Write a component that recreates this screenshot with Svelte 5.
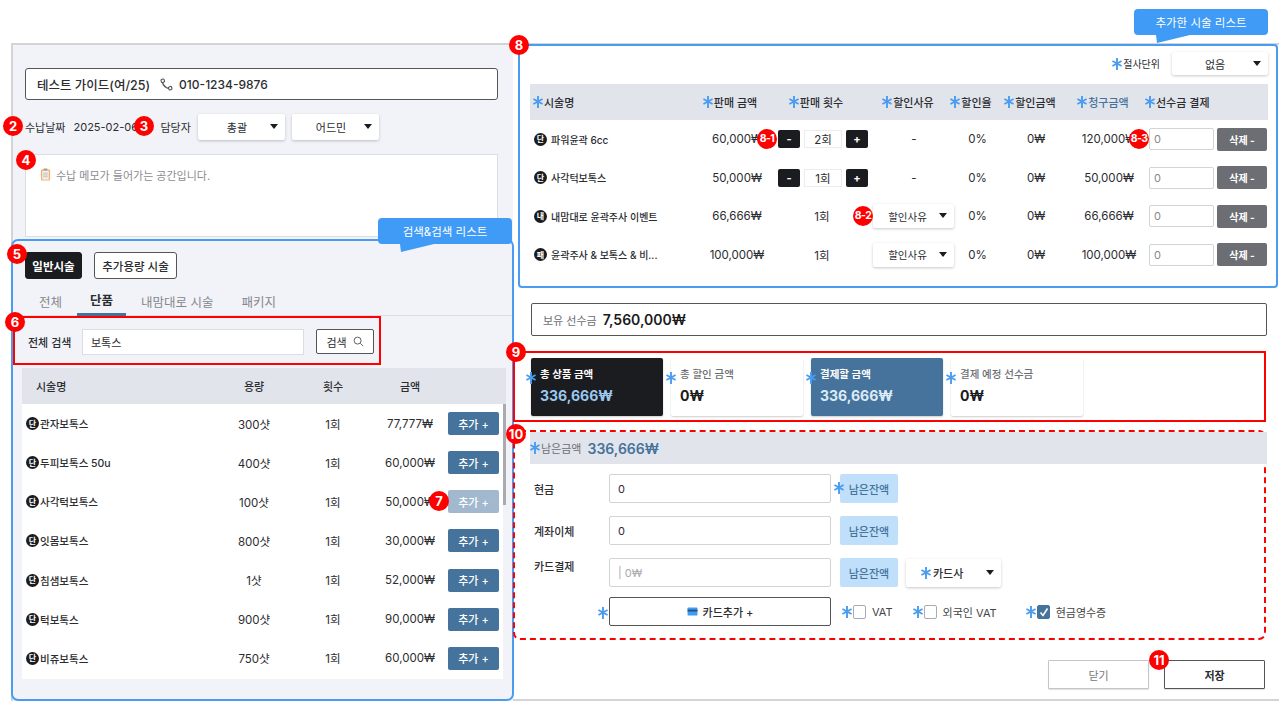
<script>
	const procedures = [
		{ name: '관자보톡스', volume: '300샷', price: '77,777₩' },
		{ name: '두피보톡스 50u', volume: '400샷', price: '60,000₩' },
		{ name: '사각턱보톡스', volume: '100샷', price: '50,000₩', off: true },
		{ name: '잇몸보톡스', volume: '800샷', price: '30,000₩' },
		{ name: '침샘보톡스', volume: '1샷', price: '52,000₩' },
		{ name: '턱보톡스', volume: '900샷', price: '90,000₩' },
		{ name: '비쥬보톡스', volume: '750샷', price: '60,000₩' }
	];

	const added = [
		{ kind: '단', name: '파워윤곽 6cc', price: '60,000₩', count: '2회', stepper: true, total: '120,000₩' },
		{ kind: '단', name: '사각턱보톡스', price: '50,000₩', count: '1회', stepper: true, total: '50,000₩' },
		{ kind: '내', name: '내맘대로 윤곽주사 이벤트', price: '66,666₩', count: '1회', total: '66,666₩' },
		{ kind: '패', name: '윤곽주사 & 보톡스 & 비...', price: '100,000₩', count: '1회', total: '100,000₩' }
	];

	const heads = [
		{ label: '시술명', cls: 'name-head' },
		{ label: '판매 금액' },
		{ label: '판매 횟수' },
		{ label: '할인사유' },
		{ label: '할인율' },
		{ label: '할인금액' },
		{ label: '청구금액', cls: 'accent' },
		{ label: '선수금 결제', cls: 'prepay-head' }
	];

	const totals = [
		{ label: '총 상품 금액', value: '336,666₩', tone: 'dark' },
		{ label: '총 할인 금액', value: '0₩', tone: '' },
		{ label: '결제할 금액', value: '336,666₩', tone: 'blue' },
		{ label: '결제 예정 선수금', value: '0₩', tone: '' }
	];

	const markers = [
		{ t: '2', x: 13, y: 126 },
		{ t: '3', x: 144, y: 126 },
		{ t: '4', x: 26, y: 160 },
		{ t: '5', x: 17, y: 254 },
		{ t: '6', x: 15, y: 322 },
		{ t: '7', x: 439, y: 501 },
		{ t: '8', x: 519, y: 45 },
		{ t: '9', x: 516, y: 352 },
		{ t: '10', x: 516, y: 434 },
		{ t: '11', x: 1159, y: 660 },
		{ t: '8-1', x: 767, y: 139, small: true },
		{ t: '8-3', x: 1139, y: 139, small: true },
		{ t: '8-2', x: 863, y: 216, small: true }
	];
</script>

{#snippet star()}
	<svg class="star" viewBox="0 0 10 12" width="10" height="12" aria-hidden="true">
		<path d="M5 0v12M.4 3l9.200 5M9.600 3L.4 8" fill="none" stroke="#4a9cf0" stroke-width="1.900" />
	</svg>
{/snippet}

{#snippet badge(kind)}
	<span class="badge">{kind}</span>
{/snippet}

<div class="page">
	<div class="modal">
		<div class="side">
			<div class="top">
				<div class="guest">
					<span class="guest-name">테스트 가이드(여/25)</span>
					<svg class="phone" viewBox="0 0 14 14" width="13" height="13" aria-hidden="true">
						<path d="M2.500 4.200C3.400 8 6 10.600 9.800 11.500" fill="none" stroke="#555" stroke-width="1.500" />
						<rect x="1.300" y="1.300" width="3.400" height="3.400" rx="1" fill="#fff" stroke="#555" stroke-width="1.200" transform="rotate(-20 3 3)" />
						<rect x="9.300" y="9.300" width="3.400" height="3.400" rx="1" fill="#fff" stroke="#555" stroke-width="1.200" transform="rotate(-20 11 11)" />
					</svg>
					<span>010-1234-9876</span>
				</div>
				<div class="meta">
					<span class="meta-label">수납날짜</span>
					<span class="meta-date">2025-02-06</span>
					<span class="meta-owner">담당자</span>
					<div class="select owner">총괄<i class="caret"></i></div>
					<div class="select owner">어드민<i class="caret"></i></div>
				</div>
				<div class="memo">
					<svg viewBox="0 0 12 14" width="11" height="13" aria-hidden="true">
						<rect x="1" y="1.500" width="10" height="12" rx="1" fill="#f0b27a" />
						<rect x="2.500" y="3" width="7" height="9.500" fill="#f7f3ec" />
						<path d="M3.500 5.500h5M3.500 7.500h5M3.500 9.500h5" stroke="#a9a9a9" stroke-width=".8" />
						<rect x="4" y=".5" width="4" height="2" fill="#9a9a9a" />
					</svg>
					<span>수납 메모가 들어가는 공간입니다.</span>
				</div>
			</div>

			<section class="search-panel">
				<div class="types">
					<button class="type on">일반시술</button>
					<button class="type extra">추가용량 시술</button>
				</div>
				<div class="tabs">
					<span class="tab">전체</span>
					<span class="tab active">단품</span>
					<span class="tab">내맘대로 시술</span>
					<span class="tab">패키지</span>
				</div>
				<div class="search">
					<span class="search-label">전체 검색</span>
					<div class="search-input">보톡스</div>
					<button class="search-btn">
						검색
						<svg viewBox="0 0 12 12" width="11" height="11" aria-hidden="true">
							<circle cx="5" cy="5" r="3.800" fill="none" stroke="#555" stroke-width="1" />
							<path d="M8 8l3 3" stroke="#555" stroke-width="1" />
						</svg>
					</button>
				</div>
				<div class="table">
					<div class="thead proc-grid">
						<span class="th-name">시술명</span>
						<span>용량</span>
						<span>횟수</span>
						<span>금액</span>
					</div>
					<div class="tbody">
						{#each procedures as p}
							<div class="proc-grid proc-row">
								<span class="proc-name">{@render badge('단')}{p.name}</span>
								<span>{p.volume}</span>
								<span>1회</span>
								<span>{p.price}</span>
								<button class="add" class:off={p.off}>추가 +</button>
							</div>
						{/each}
						<div class="scroll"></div>
					</div>
				</div>
			</section>
		</div>

		<div class="right">
			<section class="added">
				<div class="cut">
					{@render star()}
					<span>절사단위</span>
					<div class="select cut-select">없음<i class="caret"></i></div>
				</div>
				<div class="added-head">
					{#each heads as h}
						<span class={h.cls}>{@render star()}{h.label}</span>
					{/each}
				</div>
				{#each added as row}
					<div class="added-row">
						<span class="added-name">{@render badge(row.kind)}{row.name}</span>
						<span class="added-price">{row.price}</span>
						{#if row.stepper}
							<span class="stepper">
								<b class="step">-</b>
								<span class="count">{row.count}</span>
								<b class="step">+</b>
							</span>
						{:else}
							<span class="count-text">{row.count}</span>
						{/if}
						{#if row.stepper}
							<span>-</span>
						{:else}
							<div class="select reason">할인사유<i class="caret"></i></div>
						{/if}
						<span class="rate">0%</span>
						<span>0₩</span>
						<span>{row.total}</span>
						<div class="prepay">0</div>
						<button class="del">삭제 -</button>
					</div>
				{/each}
			</section>

			<div class="held">
				<span class="held-label">보유 선수금</span>
				<span class="held-value">7,560,000₩</span>
			</div>

			<div class="totals">
				{#each totals as c}
					<div class="total-card {c.tone}">
						<span class="card-star">{@render star()}</span>
						<div class="total-label">{c.label}</div>
						<div class="total-value">{c.value}</div>
					</div>
				{/each}
			</div>

			<div class="pay">
				<div class="pay-head">
					{@render star()}
					<span class="pay-label">남은금액</span>
					<span class="pay-value">336,666₩</span>
				</div>
				<div class="pay-row first">
					<span class="pay-name">현금</span>
					<div class="pay-input">0</div>
					<div class="rest">
						<span class="rest-star">{@render star()}</span>
						남은잔액
					</div>
				</div>
				<div class="pay-row">
					<span class="pay-name">계좌이체</span>
					<div class="pay-input">0</div>
					<div class="rest">남은잔액</div>
				</div>
				<div class="pay-row">
					<span class="pay-name raised">카드결제</span>
					<div class="pay-input hint">| 0₩</div>
					<div class="rest">남은잔액</div>
					<div class="select card-co">{@render star()}<span>카드사</span><i class="caret"></i></div>
				</div>
				<div class="pay-row last">
					<span class="pay-name"></span>
					<button class="card-add">
						<span class="card-add-star">{@render star()}</span>
						<svg viewBox="0 0 12 10" width="11" height="9" aria-hidden="true">
							<rect x=".5" y=".5" width="11" height="9" rx="1" fill="#3f9bf5" />
							<rect x=".5" y="3" width="11" height="2" fill="#24527c" />
						</svg>
						카드추가 +
					</button>
					<label class="check vat">{@render star()}<i class="box"></i>VAT</label>
					<label class="check foreign">{@render star()}<i class="box"></i>외국인 VAT</label>
					<label class="check cash">
						{@render star()}
						<i class="box on">
							<svg viewBox="0 0 12 12" width="12" height="12" aria-hidden="true">
								<path d="M2.500 6.500l2.500 3 4.500-7" fill="none" stroke="#fff" stroke-width="1.600" />
							</svg>
						</i>
						현금영수증
					</label>
				</div>
			</div>

			<div class="actions">
				<button class="act">닫기</button>
				<button class="act save">저장</button>
			</div>
		</div>
	</div>

	<div class="tip tip-search">검색&amp;검색 리스트</div>
	<div class="tip tip-added">추가한 시술 리스트</div>

	{#each markers as m}
		<span class="marker" class:small={m.small} style="left:{m.x - 10}px;top:{m.y - 10}px">{m.t}</span>
	{/each}
</div>

<style>
	:global(body) {
		font-family: Inter, 'Noto Sans CJK KR', sans-serif;
		color: #2b2d31;
		background: #fff;
		overflow: hidden;
	}

	* {
		box-sizing: border-box;
	}

	button {
		font-family: inherit;
		cursor: pointer;
	}

	.page {
		position: relative;
		width: 1279px;
		height: 702px;
		padding: 43px 0 0 11px;
		overflow: hidden;
	}

	.modal {
		display: grid;
		grid-template-columns: 500px 1fr;
		height: 658px;
		border: 2px solid #d3d4d6;
		border-right: none;
	}

	.side {
		background: #f1f3f8;
		min-width: 0;
	}

	.top {
		padding: 23px 0 0 12px;
	}

	.guest {
		display: flex;
		align-items: center;
		width: 473px;
		height: 32px;
		padding-left: 11px;
		background: #fff;
		border: 1px solid #555;
		border-radius: 3px;
		font-size: 12px;
		font-weight: 500;
	}

	.guest-name {
		font-size: 12.500px;
	}

	.phone {
		margin: 0 6px 0 10px;
	}

	.meta {
		display: flex;
		align-items: center;
		height: 27px;
		margin-top: 13px;
		font-size: 11px;
	}

	.meta-date {
		margin-left: 8px;
		width: 87px;
	}

	.meta-owner {
		width: 38px;
	}

	.select {
		position: relative;
		display: flex;
		align-items: center;
		justify-content: center;
		background: #fff;
		border-radius: 2px;
		box-shadow: 0 1px 3px rgba(0, 0, 0, 0.22);
		font-size: 11px;
	}

	.caret {
		position: absolute;
		right: 7px;
		top: 50%;
		margin-top: -3px;
		border-left: 4px solid transparent;
		border-right: 4px solid transparent;
		border-top: 5px solid #1a1c20;
	}

	.owner {
		width: 87px;
		height: 26px;
		margin-right: 7px;
		padding-right: 10px;
	}

	.memo {
		display: flex;
		align-items: center;
		gap: 5px;
		width: 473px;
		height: 83px;
		margin-top: 14px;
		padding: 0 0 42px 14px;
		background: #fff;
		border: 1px solid #dcdde0;
		font-size: 11px;
		color: #8b8d91;
	}

	.search-panel {
		width: 503px;
		height: 462px;
		margin: 2px 0 0 -2px;
		border: 2px solid #4a9cf0;
		border-radius: 7px;
	}

	.types {
		display: flex;
		gap: 12px;
		padding: 11px 0 0 12px;
	}

	.type {
		width: 57px;
		height: 27px;
		padding: 0;
		background: #fff;
		border: 1px solid #555;
		border-radius: 3px;
		font-size: 11.500px;
		font-weight: 500;
		color: #2b2d31;
	}

	.type.extra {
		width: 83px;
	}

	.type.on {
		background: #1a1c20;
		border-color: #1a1c20;
		color: #fff;
		font-weight: 700;
	}

	.tabs {
		display: flex;
		gap: 2px;
		height: 30px;
		margin-top: 7px;
		padding-left: 13px;
		border-bottom: 1px solid #dcdde0;
	}

	.tab {
		padding: 6px 13px 0;
		font-size: 12.500px;
		color: #85878c;
		margin-bottom: -1px;
	}

	.tab.active {
		border-bottom: 3px solid #45739b;
		color: #2b2d31;
		font-weight: 700;
		padding-top: 4px;
	}

	.search {
		display: flex;
		align-items: center;
		width: 368px;
		height: 49px;
		padding: 2px 0 0 13px;
		border: 2px solid #f00;
		font-size: 11px;
	}

	.search-label {
		width: 54px;
		font-weight: 500;
	}

	.search-input {
		display: flex;
		align-items: center;
		width: 222px;
		height: 26px;
		padding-left: 8px;
		background: #fff;
		border: 1px solid #dcdde0;
	}

	.search-btn {
		display: flex;
		align-items: center;
		justify-content: center;
		gap: 6px;
		width: 58px;
		height: 25px;
		margin-left: 12px;
		background: #fff;
		border: 1px solid #555;
		border-radius: 2px;
		font-size: 11px;
		color: #2b2d31;
	}

	.table {
		margin: 3px 0 0 9px;
		font-size: 11px;
	}

	.thead {
		width: 484px;
		height: 36px;
		background: #e1e4eb;
		font-weight: 500;
	}

	.proc-grid {
		display: grid;
		grid-template-columns: 194px 76px 82px 72px 1fr;
		align-items: center;
		text-align: center;
	}

	.th-name {
		padding-left: 14px;
		text-align: left;
	}

	.tbody {
		position: relative;
		width: 481px;
		height: 275px;
		background: #fff;
	}

	.proc-row {
		height: 39.150px;
		padding-right: 4px;
		font-size: 11.500px;
	}

	.proc-name {
		display: flex;
		align-items: center;
		gap: 1px;
		padding-left: 4px;
		font-size: 10.500px;
		font-weight: 500;
	}

	.badge {
		display: inline-flex;
		align-items: center;
		justify-content: center;
		flex: none;
		width: 13px;
		height: 13px;
		border-radius: 50%;
		background: #1a1c20;
		color: #fff;
		font-size: 8px;
		font-weight: 700;
		line-height: 1;
	}

	.add {
		justify-self: end;
		width: 51px;
		height: 23px;
		padding: 0;
		background: #45739b;
		border: none;
		border-radius: 2px;
		color: #fff;
		font-size: 11px;
		font-weight: 500;
	}

	.add.off {
		background: #a1b8cf;
	}

	.scroll {
		position: absolute;
		left: 481px;
		top: 0;
		width: 3px;
		height: 101px;
		background: #a9abb0;
	}

	.right {
		min-width: 0;
	}

	.added {
		width: 760px;
		height: 244px;
		margin: -1px 0 0 5px;
		padding: 6px 8px 0 10px;
		background: #fff;
		border: 2px solid #4a9cf0;
		border-radius: 4px;
		font-size: 11px;
	}

	.cut {
		display: flex;
		align-items: center;
		justify-content: flex-end;
		gap: 1px;
		height: 23px;
		font-size: 10px;
	}

	.cut-select {
		width: 96px;
		height: 23px;
		margin-left: 11px;
		padding-right: 10px;
	}

	.added-head,
	.added-row {
		display: grid;
		align-items: center;
		text-align: center;
	}

	.added-head {
		grid-template-columns: 164px 72px 100px 84px 42px 76px 70px 130px;
		height: 36px;
		margin-top: 9px;
		background: #e1e4eb;
		font-size: 11px;
		font-weight: 500;
	}

	.added-head span {
		display: flex;
		align-items: center;
		justify-content: center;
		gap: 1px;
		white-space: nowrap;
	}

	.added-head .name-head {
		justify-content: flex-start;
		padding-left: 3px;
	}

	.added-head .prepay-head {
		justify-content: flex-start;
		padding-left: 7px;
	}

	.added-head .accent {
		color: #45739b;
	}

	.added-row {
		grid-template-columns: 164px 74px 105px 82px 48px 66px 80px 68px 51px;
		height: 38.500px;
		font-size: 11.500px;
	}

	.added-name {
		display: flex;
		align-items: center;
		gap: 4px;
		padding-left: 4px;
		font-size: 10px;
		font-weight: 500;
		white-space: nowrap;
	}

	.added-price {
		padding-left: 8px;
		margin-right: -4px;
	}

	.rate {
		padding-right: 3px;
	}

	.stepper {
		display: flex;
		align-items: center;
		gap: 4px;
		padding-left: 10px;
	}

	.step {
		display: flex;
		align-items: center;
		justify-content: center;
		width: 22px;
		height: 18px;
		background: #1a1c20;
		border-radius: 2px;
		color: #fff;
		font-size: 11px;
	}

	.count {
		display: flex;
		align-items: center;
		justify-content: center;
		width: 38px;
		height: 18px;
		background: #fff;
		border: 1px solid #ececee;
	}

	.count-text {
		padding-left: 3px;
	}

	.reason {
		width: 81px;
		height: 24px;
		font-size: 10.500px;
		padding-right: 12px;
	}

	.prepay {
		display: flex;
		align-items: center;
		width: 65px;
		height: 22px;
		padding-left: 4px;
		border: 1px solid #d3d4d6;
		border-radius: 2px;
		color: #888;
		font-size: 11px;
	}

	.del {
		justify-self: start;
		width: 50px;
		height: 23px;
		padding: 0;
		background: #6c6e73;
		border: none;
		border-radius: 2px;
		color: #fff;
		font-size: 10px;
		font-weight: 700;
	}

	.held {
		display: flex;
		align-items: center;
		gap: 6px;
		width: 736px;
		height: 33px;
		margin: 15px 0 0 18px;
		padding-left: 11px;
		border: 1px solid #555;
		border-radius: 2px;
	}

	.held-label {
		font-size: 11px;
		color: #6c6e73;
	}

	.held-value {
		font-size: 14px;
		font-weight: 600;
		color: #1a1c20;
	}

	.totals {
		display: flex;
		gap: 8px;
		width: 753px;
		height: 71px;
		margin-top: 15px;
		padding: 5px 0 0 16px;
		border: 2px solid #f00;
	}

	.total-card {
		position: relative;
		width: 132px;
		height: 58px;
		padding: 9px 0 0 9px;
		background: #fff;
		box-shadow: 0 1px 2px rgba(0, 0, 0, 0.2);
		border-radius: 2px;
	}

	.total-card.dark {
		background: #1a1c20;
	}

	.total-card.blue {
		background: #45739b;
	}

	.card-star {
		position: absolute;
		left: -5px;
		top: 10px;
	}

	.total-label {
		font-size: 10.500px;
		font-weight: 500;
		color: #6c6e73;
		line-height: 15px;
	}

	.dark .total-label,
	.blue .total-label {
		color: #fff;
		font-weight: 700;
	}

	.total-value {
		margin-top: 5px;
		font-size: 14px;
		font-weight: 700;
		color: #1a1c20;
		line-height: 18px;
	}

	.dark .total-value {
		color: #9cc8ee;
	}

	.blue .total-value {
		color: #dcebf8;
	}

	.pay {
		position: relative;
		width: 753px;
		height: 210px;
		margin-top: 8px;
		border: 2px dashed #f00;
		border-radius: 7px;
		font-size: 11px;
	}

	.pay-head {
		display: flex;
		align-items: center;
		gap: 1px;
		width: 737px;
		height: 32px;
		margin-left: 15px;
		background: #e1e4eb;
	}

	.pay-label {
		color: #6c6e73;
		font-size: 11px;
	}

	.pay-value {
		margin-left: 5px;
		color: #45739b;
		font-size: 14px;
		font-weight: 600;
	}

	.pay-row {
		display: flex;
		align-items: center;
		height: 29px;
		margin-top: 13px;
	}

	.pay-row.first {
		margin-top: 10px;
	}

	.pay-row.last {
		margin-top: 10px;
	}

	.pay-name {
		flex: none;
		width: 94px;
		padding-left: 19px;
		font-weight: 500;
	}

	.pay-name.raised {
		margin-top: -14px;
	}

	.pay-input {
		display: flex;
		align-items: center;
		width: 222px;
		height: 29px;
		padding-left: 8px;
		border: 1px solid #d3d4d6;
		border-radius: 2px;
	}

	.pay-input.hint {
		color: #a9abb0;
	}

	.rest {
		position: relative;
		display: flex;
		align-items: center;
		justify-content: center;
		width: 58px;
		height: 29px;
		margin-left: 9px;
		background: #bfdffa;
		border-radius: 2px;
		color: #45739b;
		font-weight: 500;
	}

	.rest-star {
		position: absolute;
		left: -6px;
		top: 8px;
	}

	.card-co {
		justify-content: flex-start;
		gap: 2px;
		width: 95px;
		height: 28px;
		margin-left: 8px;
		padding-left: 15px;
		font-weight: 500;
	}

	.card-add {
		position: relative;
		display: flex;
		align-items: center;
		justify-content: center;
		gap: 5px;
		width: 222px;
		height: 29px;
		padding: 0;
		background: #fff;
		border: 1px solid #555;
		border-radius: 2px;
		font-size: 11px;
		font-weight: 500;
		color: #2b2d31;
	}

	.card-add-star {
		position: absolute;
		left: -12px;
		top: 9px;
	}

	.check {
		display: flex;
		align-items: center;
		gap: 1px;
		color: #444;
	}

	.vat {
		margin-left: 11px;
	}

	.foreign {
		margin-left: 20px;
	}

	.cash {
		margin-left: 29px;
	}

	.box {
		display: block;
		width: 13px;
		height: 14px;
		margin-right: 5px;
		background: #fff;
		border: 1px solid #a9abb0;
		border-radius: 2px;
	}

	.box.on {
		background: #45739b;
		border-color: #45739b;
		line-height: 0;
	}

	.actions {
		display: flex;
		gap: 15px;
		justify-content: flex-end;
		margin: 20px 14px 0 0;
	}

	.act {
		width: 101px;
		height: 29px;
		padding: 0;
		background: #fff;
		border: 1px solid #c4c5c8;
		border-radius: 1px;
		font-size: 11px;
		color: #777;
		box-shadow: 0 1px 1px rgba(0, 0, 0, 0.12);
	}

	.act.save {
		border-color: #555;
		color: #2b2d31;
		font-weight: 700;
	}

	.tip {
		position: absolute;
		display: flex;
		align-items: center;
		justify-content: center;
		width: 134px;
		height: 26px;
		background: #3f9bf5;
		border-radius: 4px;
		color: #fff;
		font-size: 11.500px;
	}

	.tip::after {
		content: '';
		position: absolute;
		top: 26px;
		left: 22px;
		width: 34px;
		height: 8px;
		background: #3f9bf5;
		clip-path: polygon(0 0, 100% 0, 3% 100%);
	}

	.tip-search {
		left: 378px;
		top: 218px;
	}

	.tip-added {
		left: 1134px;
		top: 9px;
	}

	.marker {
		position: absolute;
		display: flex;
		align-items: center;
		justify-content: center;
		width: 20px;
		height: 20px;
		background: #f00;
		border-radius: 50%;
		color: #fff;
		font-size: 13px;
		font-weight: 700;
		line-height: 1;
	}

	.marker.small {
		font-size: 10.500px;
		letter-spacing: -0.6px;
	}
</style>
